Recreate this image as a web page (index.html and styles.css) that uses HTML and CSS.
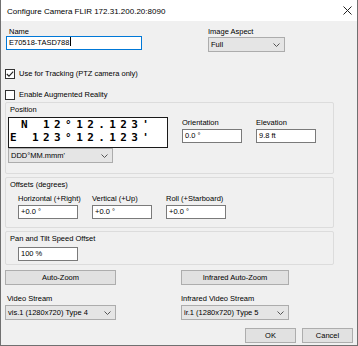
FILE: index.html
```html
<!DOCTYPE html>
<html>
  <head>
    <meta charset="utf-8" />
    <title>Configure Camera</title>
    <link rel="stylesheet" href="styles.css">
  </head>
  <body>
    <div class="window">
      <div class="titlebar">
        <span class="title">Configure Camera FLIR 172.31.200.20:8090</span>
        <svg class="close" width="9" height="9" viewBox="0 0 9 9">
          <path d="M0.5 0.5 L8.5 8.5 M8.5 0.5 L0.5 8.5" stroke="#222" stroke-width="1" fill="none" />
        </svg>
      </div>

      <div class="content">
        <div class="top-row">
          <div class="field name-field">
            <div class="label">Name</div>
            <div class="input focused">E70518-TASD788<span class="caret"></span></div>
          </div>
          <div class="field aspect-field">
            <div class="label">Image Aspect</div>
            <div class="select">
              <span>Full</span>
              <svg class="chev" width="7" height="4" viewBox="0 0 7 4"><path d="M0.5 0.5 L3.5 3.5 L6.5 0.5" stroke="#555" fill="none" /></svg>
            </div>
          </div>
        </div>

        <div class="check first">
          <span class="box">
            <svg width="8" height="8" viewBox="0 0 8 8"><path d="M0.8 4 L3 6.2 L7.2 1.6" stroke="#222" stroke-width="1.1" fill="none" /></svg>
          </span>
          <span>Use for Tracking (PTZ camera only)</span>
        </div>
        <div class="check second">
          <span class="box"></span>
          <span>Enable Augmented Reality</span>
        </div>

        <!-- position -->
        <div class="panel position">
          <div class="panel-title">Position</div>
          <div class="pos-row">
            <div class="coords-col">
              <div class="coords">
                <div class="coord-line"> N 12°12.123'</div>
                <div class="coord-line">E 123°12.123'</div>
              </div>
              <div class="select fmt">
                <span>DDD°MM.mmm'</span>
                <svg class="chev" width="7" height="4" viewBox="0 0 7 4"><path d="M0.5 0.5 L3.5 3.5 L6.5 0.5" stroke="#555" fill="none" /></svg>
              </div>
            </div>
            <div class="field small">
              <div class="label">Orientation</div>
              <div class="input">0.0 °</div>
            </div>
            <div class="field small">
              <div class="label">Elevation</div>
              <div class="input">9.8 ft</div>
            </div>
          </div>
        </div>

        <!-- offsets -->
        <div class="panel offsets">
          <div class="panel-title">Offsets (degrees)</div>
          <div class="off-row">
            <div class="field small">
              <div class="label">Horizontal (+Right)</div>
              <div class="input">+0.0 °</div>
            </div>
            <div class="field small">
              <div class="label">Vertical (+Up)</div>
              <div class="input">+0.0 °</div>
            </div>
            <div class="field small">
              <div class="label">Roll (+Starboard)</div>
              <div class="input">+0.0 °</div>
            </div>
          </div>
        </div>

        <div class="panel speed">
          <div class="panel-title">Pan and Tilt Speed Offset</div>
          <div class="input speed-input">100 %</div>
        </div>

        <div class="stream-grid">
          <div class="btn">Auto-Zoom</div>
          <div class="btn">Infrared Auto-Zoom</div>
          <div class="field">
            <div class="label vs">Video Stream</div>
            <div class="select">
              <span>vis.1 (1280x720) Type 4</span>
              <svg class="chev" width="7" height="4" viewBox="0 0 7 4"><path d="M0.5 0.5 L3.5 3.5 L6.5 0.5" stroke="#555" fill="none" /></svg>
            </div>
          </div>
          <div class="field">
            <div class="label">Infrared Video Stream</div>
            <div class="select">
              <span>ir.1 (1280x720) Type 5</span>
              <svg class="chev" width="7" height="4" viewBox="0 0 7 4"><path d="M0.5 0.5 L3.5 3.5 L6.5 0.5" stroke="#555" fill="none" /></svg>
            </div>
          </div>
        </div>

        <div class="footer">
          <div class="btn ok">OK</div>
          <div class="btn">Cancel</div>
        </div>
      </div>
    </div>
  </body>
</html>
```

FILE: styles.css
```css
html,
body {
  margin: 0;
  padding: 0;
  background: #f0f0f0;
}

body {
  font-family: "Liberation Sans", Arial, sans-serif;
  font-size: 7.5px;
  color: #000;
}

.window {
  width: 358px;
  height: 346px;
  box-sizing: border-box;
  border: 1px solid #707070;
  border-top: none;
  background: #f0f0f0;
  display: flex;
  flex-direction: column;
}

.titlebar {
  height: 21px;
  background: #fff;
  display: flex;
  align-items: center;
  justify-content: space-between;
  padding: 0 5px 0 6px;
  flex-shrink: 0;
}

.title {
  font-size: 8px;
  margin-top: 1px;
}

.close {
  display: block;
}

.content {
  padding: 6px 4px 0 4px;
}

.label {
  line-height: 9px;
  height: 9px;
  white-space: nowrap;
}

.input,
.select {
  box-sizing: border-box;
  height: 14px;
  line-height: 12px;
  padding: 0 2px;
  white-space: nowrap;
}

.input {
  background: #fff;
  border: 1px solid #7a7a7a;
}

.input.focused {
  border-color: #0078d7;
}

.caret {
  display: inline-block;
  width: 1px;
  height: 9px;
  background: #000;
  vertical-align: -1px;
  margin-left: 1px;
}

.select {
  height: 15px;
  line-height: 13px;
  background: #e5e5e5;
  border: 1px solid #acacac;
  display: flex;
  align-items: center;
  justify-content: space-between;
  padding-right: 4px;
}

.chev {
  display: block;
}

/* top row */
.top-row {
  display: flex;
  gap: 66px;
}

.name-field {
  width: 136px;
  margin-left: 1px;
}

.name-field .label {
  padding-left: 3px;
}

.aspect-field {
  width: 77px;
}

.aspect-field .select {
  margin-top: 1px;
}

/* checkboxes */
.check {
  display: flex;
  align-items: center;
  gap: 4px;
  height: 11px;
}

.check.first {
  margin-top: 16px;
}

.check.second {
  margin-top: 10px;
}

.box {
  box-sizing: border-box;
  width: 10px;
  height: 10px;
  border: 1px solid #333;
  background: #fff;
  display: flex;
  align-items: center;
  justify-content: center;
}

.box svg {
  display: block;
}

/* panels */
.panel {
  border: 1px solid #dcdcdc;
  border-radius: 2px;
  width: 329px;
  box-sizing: border-box;
  padding: 0 1px;
}

.panel-title {
  line-height: 9px;
  padding-left: 3px;
  margin-top: 2px;
}

.position {
  margin-top: 2px;
  padding-bottom: 10px;
}

.pos-row {
  display: flex;
  gap: 14px;
  margin-top: 3px;
  margin-left: 1px;
}

.coords-col {
  width: 160px;
}

.coords {
  box-sizing: border-box;
  height: 31px;
  border: 1px solid #1a1a1a;
  background: #fff;
  font-family: "DejaVu Sans Mono", monospace;
  font-weight: bold;
  font-size: 11px;
  letter-spacing: 4.4px;
  line-height: 12.5px;
  padding: 1px 0 0 1px;
}

.coord-line {
  white-space: pre;
}

.fmt {
  width: 105px;
}

.field.small {
  width: 60px;
  margin-top: 1px;
}

.field.small .input {
  margin-top: 2px;
}

.offsets {
  margin-top: 3px;
  padding-bottom: 8px;
}

.off-row {
  display: flex;
  gap: 14px;
  margin: 5px 0 0 11px;
}

.off-row .field.small {
  margin-top: 0;
}

.speed {
  margin-top: 3px;
  padding-bottom: 3px;
}

.speed-input {
  width: 60px;
  margin: 4px 0 0 11px;
}

/* buttons and streams */
.btn {
  box-sizing: border-box;
  height: 15px;
  line-height: 13px;
  background: #e1e1e1;
  border: 1px solid #adadad;
  text-align: center;
}

.stream-grid {
  display: grid;
  grid-template-columns: 111px 108px;
  column-gap: 65px;
  margin-top: 5px;
}

.stream-grid .field {
  margin-top: 9px;
}

.stream-grid .select {
  margin-top: 2px;
}

.label.vs {
  padding-left: 2px;
}

.footer {
  display: flex;
  justify-content: flex-end;
  gap: 6px;
  margin-top: 8px;
}

.footer .btn {
  width: 51px;
}
```
